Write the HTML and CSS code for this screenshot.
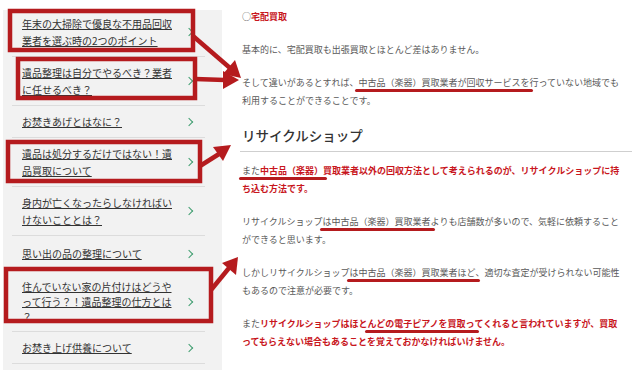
FILE: index.html
```html
<!DOCTYPE html>
<html lang="ja">
<head>
    <meta charset="UTF-8">
    <meta name="viewport" content="width=device-width, initial-scale=1.0">
    <title>リサイクルショップ</title>
    <link rel="stylesheet" href="styles.css">
</head>
<body>
    <div class="page">
        <!-- サイドバー：関連記事 -->
        <aside class="sidebar">
            <ul>
                <li class="first"><a href="#">年末の大掃除で優良な不用品回収業者を選ぶ時の2つのポイント</a><span class="chev"></span></li>
                <li><a href="#">遺品整理は自分でやるべき？業者に任せるべき？</a><span class="chev"></span></li>
                <li><a href="#">お焚きあげとはなに？</a><span class="chev"></span></li>
                <li><a href="#">遺品は処分するだけではない！遺品買取について</a><span class="chev"></span></li>
                <li><a href="#">身内が亡くなったらしなければいけないこととは？</a><span class="chev"></span></li>
                <li class="loose"><a href="#">思い出の品の整理について</a><span class="chev"></span></li>
                <li class="tight"><a href="#">住んでいない家の片付けはどうやって行う？！遺品整理の仕方とは？</a><span class="chev"></span></li>
                <li><a href="#">お焚き上げ供養について</a><span class="chev"></span></li>
            </ul>
        </aside>

        <!-- 本文 -->
        <main class="content">
            <p>○<span class="red">宅配買取</span></p>
            <p>基本的に、宅配買取も出張買取とほとんど差はありません。</p>
            <p>そして違いがあるとすれば、<span class="mark">中古品（楽器）買取業者が回収サービスを</span>行っていない地域でも利用することができることです。</p>

            <h2>リサイクルショップ</h2>

            <p><span class="mark">また<span class="red">中古品（楽器）</span></span><span class="red">買取業者以外の回収方法として考えられるのが、リサイクルショップに持ち込む方法です。</span></p>
            <p>リサイクルショップ<span class="mark">は中古品（楽器）買取業者</span>よりも店舗数が多いので、気軽に依頼することができると思います。</p>
            <p>しかしリサイクルショップ<span class="mark">は中古品（楽器）買取業者ほど</span>、適切な査定が受けられない可能性もあるので注意が必要です。</p>
            <p>また<span class="red">リサイクルショップはほと<span class="mark">んどの電子ピアノを買取っ</span>てくれると言われていますが、買取ってもらえない場合もあることを覚えておかなければいけません。</span></p>
        </main>
    </div>

    <!-- 赤枠と矢印の注釈 -->
    <svg class="notes" width="637" height="370" viewBox="0 0 637 370">
        <g fill="none" stroke="#b51b1e" stroke-width="4.5">
            <rect x="10" y="11" width="183" height="39"/>
            <rect x="18" y="59" width="177" height="39"/>
            <rect x="8" y="142" width="192" height="39"/>
            <rect x="6" y="269" width="205" height="52"/>
            <line x1="193" y1="36" x2="230" y2="68"/>
            <line x1="195" y1="79" x2="225" y2="80"/>
            <line x1="200" y1="166" x2="219" y2="154"/>
            <line x1="211" y1="290" x2="229" y2="268"/>
        </g>
        <g fill="#b51b1e">
            <polygon points="241,78 223,74 235,60"/>
            <polygon points="239,80 223,71 223,89"/>
            <polygon points="231,145 223,161 213,147"/>
            <polygon points="238,257 236,275 222,263"/>
        </g>
    </svg>
</body>
</html>
```

FILE: styles.css
```css
body{
    margin: 0;
    background: #fff;
    font-family: "Noto Sans CJK JP", "Noto Sans", sans-serif;
    line-break: loose;
}
.page{
    display: flex;
    align-items: flex-start;
}
.notes{
    position: absolute;
    top: 0;
    left: 0;
    pointer-events: none;
}

/* サイドバー */
.sidebar{
    width: 219px;
    height: 360px;
    margin: 10px 0 0 3px;
    background: #f2f2f2;
    overflow: hidden;
}
.sidebar ul{
    list-style: none;
    margin: 0;
    padding: 0;
}
.sidebar li{
    display: flex;
    align-items: center;
    margin: 0 17px 0 9px;
    padding: 7px 0 7px 10px;
    border-bottom: 1px solid #dcdcdc;
    font-size: 10px;
    line-height: 17px;
}
.sidebar li.first{
    padding-top: 5px;
    padding-bottom: 7px;
}
.sidebar li.loose{
    padding-top: 9px;
    padding-bottom: 8px;
}
.sidebar li.tight{
    line-height: 15px;
    padding-top: 8px;
}
.sidebar a{
    width: 156px;
    color: #333;
    text-decoration: underline;
    text-underline-offset: 1px;
}
.chev{
    width: 5px;
    height: 5px;
    margin-left: 8px;
    border-top: 1.5px solid #3e9d6f;
    border-right: 1.5px solid #3e9d6f;
    transform: rotate(45deg);
}

/* 本文 */
.content{
    width: 392px;
    margin-left: 18px;
    padding-top: 8px;
    color: #595959;
    font-size: 9px;
    line-height: 18px;
}
.content p{
    width: 382px;
    margin: 0 0 15px 2px;
}
.content h2{
    margin: 0 0 10px;
    padding: 0 0 6px 2px;
    border-bottom: 1px solid #cfcfcf;
    color: #333;
    font-size: 13.5px;
    font-weight: 500;
    line-height: 20px;
}
.red{
    color: #c8161d;
    font-weight: bold;
}
.mark{
    position: relative;
}
.mark::after{
    content: "";
    position: absolute;
    left: -3px;
    right: -4px;
    bottom: -3px;
    height: 3px;
    border-radius: 2px;
    background: #b51b1e;
}
```
